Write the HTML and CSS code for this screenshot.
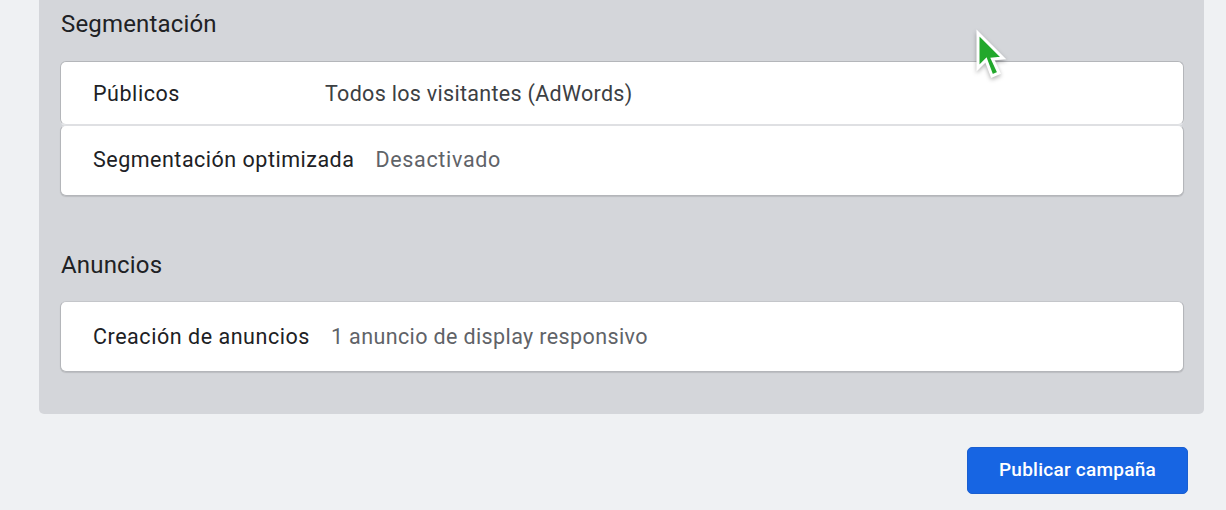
FILE: index.html
```html
<!DOCTYPE html>
<html lang="es">
<head>
    <meta charset="UTF-8">
    <title>Revisar campaña</title>
    <link rel="stylesheet" href="styles.css">
</head>
<body>

    <div class="panel">
        <h2 class="titulo">Segmentación</h2>
        <div class="grupo">
            <div class="fila fila-arriba">
                <span class="etiqueta etiqueta-ancha">Públicos</span>
                <span class="valor valor-oscuro">Todos los visitantes (AdWords)</span>
            </div>
            <div class="fila fila-abajo">
                <span class="etiqueta etiqueta-corta">Segmentación optimizada</span>
                <span class="valor valor-desactivado">Desactivado</span>
            </div>
        </div>

        <h2 class="titulo titulo-anuncios">Anuncios</h2>
        <div class="grupo">
            <div class="fila fila-abajo fila-anuncios">
                <span class="etiqueta">Creación de anuncios</span>
                <span class="valor">1 anuncio de display responsivo</span>
            </div>
        </div>
    </div>

    <div class="acciones">
        <button class="publicar">Publicar campaña</button>
    </div>

    <!-- Cursor del video -->
    <svg class="cursor" width="40" height="60" viewBox="0 0 40 60">
        <path class="cursor-flecha" d="M4 5 L4 40 L12 32 L18 48 L25 45 L18.5 31 L29 30 Z"/>
    </svg>

</body>
</html>
```

FILE: styles.css
```css
body {
    margin: 0;
    height: 510px;
    overflow: hidden;
    position: relative;
    font-family: Roboto, Arial, sans-serif;
    background-color: #eff1f3;
    color: #202124;
}

.panel {
    width: 1165px;
    height: 414px;
    margin-left: 39px;
    padding: 0 20px 0 21px;
    box-sizing: border-box;
    background-color: #d4d6da;
    border-radius: 0 0 5px 5px;
}

.titulo {
    margin: 0;
    padding: 10px 0 0 1px;
    height: 61px;
    box-sizing: border-box;
    font-size: 24px;
    line-height: 28px;
    font-weight: 400;
    letter-spacing: 0.17px;
}

.titulo-anuncios {
    margin-top: 50px;
    height: 55px;
    padding-top: 5px;
}

.grupo {
    display: flex;
    flex-direction: column;
}

.fila {
    display: flex;
    align-items: center;
    height: 71px;
    padding-left: 32px;
    box-sizing: border-box;
    background-color: #ffffff;
    border: 1px solid #b4b6ba;
    border-radius: 6px;
    font-size: 21.5px;
}

.fila-arriba {
    height: 64px;
    border-bottom-color: #dfe0e3;
    box-shadow: 0 1px 0 #e4e5e8;
}

.fila-abajo {
    padding-bottom: 3px;
    border-top-color: #dfe0e3;
    box-shadow: 0 1px 1px rgba(0, 0, 0, 0.12);
}

.fila-anuncios {
    padding-bottom: 1px;
    border-top-color: #c4c6ca;
}

.etiqueta {
    margin-right: 21px;
    letter-spacing: 0.54px;
}

.etiqueta-ancha {
    width: 211px;
}

.etiqueta-corta {
    letter-spacing: 0.5px;
}

.valor {
    color: #5f6368;
    letter-spacing: 0.38px;
}

.valor-oscuro {
    color: #3c4043;
    letter-spacing: 0.3px;
}

.valor-desactivado {
    letter-spacing: 0.68px;
}

.acciones {
    display: flex;
    justify-content: flex-end;
    padding: 33px 38px 0 0;
}

.publicar {
    width: 221px;
    height: 47px;
    padding: 0 0 2px;
    background-color: #1765e3;
    color: #ffffff;
    border: 1px solid #1a5fd0;
    border-radius: 5px;
    font-family: Roboto, Arial, sans-serif;
    font-size: 19px;
    font-weight: 500;
    letter-spacing: 0.25px;
}

.cursor {
    position: absolute;
    left: 974px;
    top: 28px;
    filter: drop-shadow(0 2px 2px rgba(0, 0, 0, 0.3));
}

.cursor-flecha {
    fill: #22a82c;
    stroke: #ffffff;
    stroke-width: 3px;
    stroke-linejoin: miter;
}
```
